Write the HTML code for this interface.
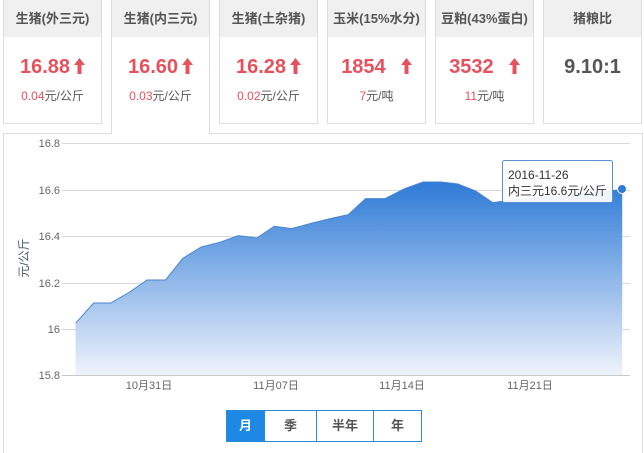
<!DOCTYPE html>
<html><head><meta charset="utf-8"><style>
*{margin:0;padding:0;box-sizing:border-box}
body{width:644px;height:444px;background:#fff;font-family:"Liberation Sans","Noto Sans CJK SC",sans-serif;position:relative;overflow:hidden}
.card{position:absolute;top:0;width:99px;height:124px;border:1px solid #ddd;border-top:none;background:#fff}
.card .h{height:37px;background:#f0f0f0;text-align:center;line-height:37px;font-size:13px;font-weight:bold;color:#555}
.card .v{text-align:center;font-size:20px;font-weight:bold;color:#e8505b;margin-top:18px;height:24px;line-height:24px}
.card .v svg{vertical-align:-1px;margin-left:4px}
.card .s{text-align:center;font-size:12px;color:#555;margin-top:8px}
.card .s b{font-weight:normal;color:#e8505b}
.act{height:134px;border-bottom:none;z-index:2}
.panel{position:absolute;left:3px;top:133px;width:640px;height:320px;border:1px solid #ddd;border-bottom:none;z-index:1}
.btns{position:absolute;top:410px;left:226px;height:32px;display:flex;border:1px solid #2a8ad8;z-index:3}
.btns div{height:30px;line-height:30px;text-align:center;font-size:13px;font-weight:bold;color:#555;border-left:1px solid #2a8ad8}
.btns div:first-child{background:#1e88e5;color:#fff;border-left:none}
</style></head><body>
<div class="card" style="left:3px"><div class="h">生猪(外三元)</div><div class="v">16.88<svg width="11" height="16" viewBox="0 0 11 16"><path d="M5.5 0 L11 7 H7.5 V16 H3.5 V7 H0 Z" fill="#e8505b"/></svg></div><div class="s"><b>0.04</b>元/公斤</div></div>
<div class="card act" style="left:111px"><div class="h">生猪(内三元)</div><div class="v">16.60<svg width="11" height="16" viewBox="0 0 11 16"><path d="M5.5 0 L11 7 H7.5 V16 H3.5 V7 H0 Z" fill="#e8505b"/></svg></div><div class="s"><b>0.03</b>元/公斤</div></div>
<div class="card" style="left:219px"><div class="h">生猪(土杂猪)</div><div class="v">16.28<svg width="11" height="16" viewBox="0 0 11 16"><path d="M5.5 0 L11 7 H7.5 V16 H3.5 V7 H0 Z" fill="#e8505b"/></svg></div><div class="s"><b>0.02</b>元/公斤</div></div>
<div class="card" style="left:327px"><div class="h">玉米(15%水分)</div><div class="v">1854 &nbsp;<svg width="11" height="16" viewBox="0 0 11 16"><path d="M5.5 0 L11 7 H7.5 V16 H3.5 V7 H0 Z" fill="#e8505b"/></svg></div><div class="s"><b>7</b>元/吨</div></div>
<div class="card" style="left:435px"><div class="h">豆粕(43%蛋白)</div><div class="v">3532 &nbsp;<svg width="11" height="16" viewBox="0 0 11 16"><path d="M5.5 0 L11 7 H7.5 V16 H3.5 V7 H0 Z" fill="#e8505b"/></svg></div><div class="s"><b>11</b>元/吨</div></div>
<div class="card" style="left:543px"><div class="h">猪粮比</div><div class="v" style="color:#555">9.10:1</div></div>
<div class="panel"></div>
<svg width="644" height="444" style="position:absolute;left:0;top:0;z-index:2" font-family="Liberation Sans, Noto Sans CJK SC, sans-serif">
<defs><linearGradient id="g" x1="0" y1="0" x2="0" y2="1"><stop offset="0" stop-color="#2e7ad6"/><stop offset="1" stop-color="#eef3fb"/></linearGradient></defs>
<g stroke="#d8d8d8" stroke-width="1">
<line x1="62" x2="630" y1="143.5" y2="143.5"/><line x1="62" x2="630" y1="190.5" y2="190.5"/><line x1="62" x2="630" y1="236.5" y2="236.5"/><line x1="62" x2="630" y1="283.5" y2="283.5"/><line x1="62" x2="630" y1="329.5" y2="329.5"/>
</g>
<g transform="translate(0,130) scale(0.4107,0.3333)">
<path fill="url(#g)" d="M184,580 L228,519 L270,519 L315,487 L358,450 L403,450 L445,385 L490,351 L535,337 L580,317 L625,324 L668,289 L710,296 L755,281 L800,267 L848,254 L890,206 L937,206 L985,176 L1030,156 L1075,156 L1115,162 L1158,183 L1200,218 L1245,210 L1290,205 L1335,200 L1380,195 L1425,188 L1470,185 L1515,178 L1515,735 L184,735 Z"/>
<path fill="none" stroke="#4a86d0" vector-effect="non-scaling-stroke" d="M184,580 L228,519 L270,519 L315,487 L358,450 L403,450 L445,385 L490,351 L535,337 L580,317 L625,324 L668,289 L710,296 L755,281 L800,267 L848,254 L890,206 L937,206 L985,176 L1030,156 L1075,156 L1115,162 L1158,183 L1200,218 L1245,210 L1290,205 L1335,200 L1380,195 L1425,188 L1470,185 L1515,178"/>
</g>
<line x1="62" x2="630" y1="375.5" y2="375.5" stroke="#c8c8c8"/>
<circle cx="622" cy="189" r="4.5" fill="#2e7ad6" stroke="#fff" stroke-width="1"/>
<rect x="502.5" y="160.5" width="110" height="42" rx="2" fill="#fff" fill-opacity="0.92" stroke="#5b92d6"/>
<text x="508" y="179" font-size="12" fill="#333">2016-11-26</text>
<text x="508" y="195" font-size="12" fill="#333">内三元16.6元/公斤</text>
<g font-size="11" fill="#666" text-anchor="end">
<text x="60" y="147">16.8</text><text x="60" y="194">16.6</text><text x="60" y="240">16.4</text><text x="60" y="287">16.2</text><text x="60" y="333">16</text><text x="60" y="379">15.8</text>
</g>
<g font-size="11" fill="#666" text-anchor="middle">
<text x="149" y="389">10月31日</text><text x="276" y="389">11月07日</text><text x="402" y="389">11月14日</text><text x="530" y="389">11月21日</text>
</g>
<text transform="translate(28,258) rotate(-90)" font-size="12" fill="#4a5a70" text-anchor="middle">元/公斤</text>
</svg>
<div class="btns"><div style="width:37px">月</div><div style="width:52px">季</div><div style="width:57px">半年</div><div style="width:48px">年</div></div>
</body></html>
